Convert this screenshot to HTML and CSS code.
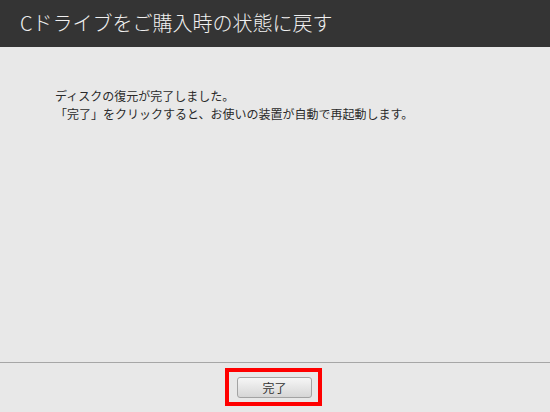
FILE: index.html
```html
<!DOCTYPE html>
<html lang="ja">
<head>
<meta charset="utf-8">
<title>Cドライブをご購入時の状態に戻す</title>
<link rel="stylesheet" href="styles.css">
</head>
<body>
<div class="page">
  <header class="titlebar">
    <h1 class="title">Cドライブをご購入時の状態に戻す</h1>
  </header>
  <main class="content">
    <p class="msg">ディスクの復元が完了しました。</p>
    <p class="msg">「完了」をクリックすると、お使いの装置が自動で再起動します。</p>
  </main>
  <footer class="footer">
    <div class="highlight">
      <button class="btn" type="button">完了</button>
    </div>
  </footer>
</div>
</body>
</html>
```

FILE: styles.css
```css
html, body {
  margin: 0;
  padding: 0;
}
body {
  width: 550px;
  height: 412px;
  overflow: hidden;
  background: #e8e8e8;
  font-family: "Noto Sans CJK JP", "Noto Sans", sans-serif;
}
.page {
  display: flex;
  flex-direction: column;
  height: 412px;
}
.titlebar {
  height: 47px;
  background: #343434;
  padding: 0 20px;
  box-sizing: border-box;
}
.title {
  margin: 0;
  font-size: 20px;
  font-weight: 300;
  line-height: 45px;
  color: #f0f0f0;
  letter-spacing: 0;
}
.content {
  flex: 1;
  padding: 40px 0 0 55px;
}
.msg {
  margin: 0;
  font-size: 12px;
  line-height: 18px;
  color: #2a2a2a;
}
.footer {
  border-top: 1px solid #a6a6a6;
  padding: 5px 0 6px 225px;
}
.highlight {
  display: inline-block;
  border: 4px solid #ff0000;
  padding: 5px 6px 4px 8px;
}
.btn {
  display: block;
  width: 75px;
  height: 21px;
  padding: 0;
  border: 1px solid #a3a3a3;
  border-radius: 3px;
  background: linear-gradient(#f6f6f6, #e6e6e6 50%, #d6d6d6);
  font-family: "Noto Sans CJK JP", "Noto Sans", sans-serif;
  font-size: 12px;
  line-height: 19px;
  color: #333;
}
```
